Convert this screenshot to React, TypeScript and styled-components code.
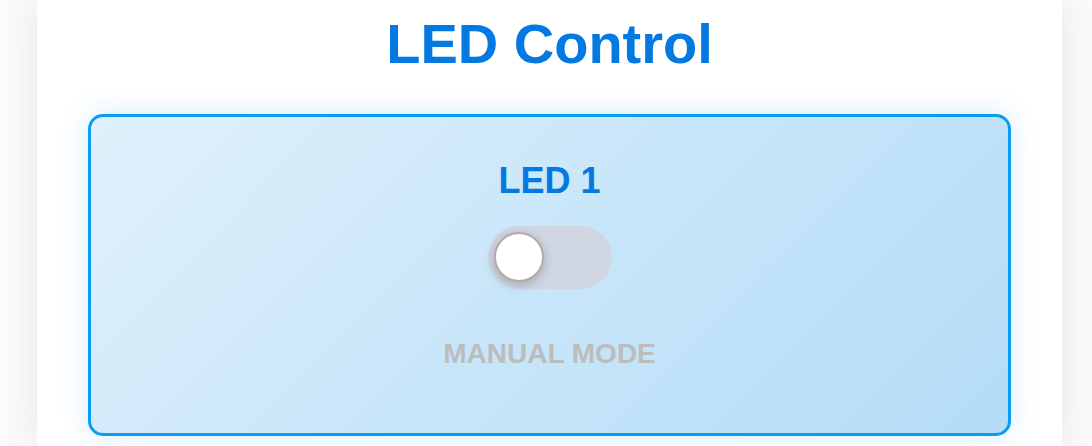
import React, { useState } from "react";
import styled, { createGlobalStyle } from "styled-components";

const Global = createGlobalStyle`
  html, body { margin: 0; padding: 0; }
  body {
    background: #fbfbfb;
    font-family: "Liberation Sans", Arial, sans-serif;
    overflow: hidden;
  }
`;

const Page = styled.div`
  display: flex;
  justify-content: flex-start;
  padding: 0 30px 0 37px;
  height: 446px;
  box-sizing: border-box;
`;

const Container = styled.main`
  flex: 1;
  background: #ffffff;
  box-shadow: 0 0 40px rgba(0, 0, 0, 0.09);
  padding: 11px 51px 40px;
  display: flex;
  flex-direction: column;
  align-items: stretch;
`;

const Title = styled.h1`
  margin: 0 0 38px;
  text-align: center;
  font-size: 56px;
  line-height: normal;
  font-weight: 700;
  color: #0479e2;
`;

const Card = styled.section`
  border: 3px solid #0a9cee;
  border-radius: 15px;
  background: linear-gradient(135deg, #e0f0fb 0%, #c8e6f9 50%, #b4dcf6 100%);
  box-shadow: 0 0 28px rgba(10, 156, 238, 0.18);
  padding: 43px 20px 63px;
  display: flex;
  flex-direction: column;
  align-items: center;
`;

const LedName = styled.h2`
  margin: 0 0 24px;
  font-size: 36px;
  line-height: normal;
  font-weight: 700;
  color: #0479e2;
`;

const Track = styled.button<{ $on: boolean }>`
  position: relative;
  width: 124px;
  height: 63px;
  border: none;
  padding: 0;
  border-radius: 32px;
  background: ${(p) => (p.$on ? "#0a9cee" : "#d0d7e3")};
  cursor: pointer;
  display: flex;
  align-items: center;
`;

const Knob = styled.span<{ $on: boolean }>`
  position: absolute;
  top: 6px;
  left: ${(p) => (p.$on ? "68px" : "6px")};
  width: 50px;
  height: 50px;
  box-sizing: border-box;
  border-radius: 50%;
  background: #ffffff;
  border: 2px solid #b3aca6;
  box-shadow: 0 3px 12px rgba(0, 0, 0, 0.22);
  transition: left 0.2s;
`;

const Mode = styled.div`
  margin-top: 49px;
  font-size: 28px;
  line-height: normal;
  font-weight: 700;
  color: #bcbcbc;
  text-transform: uppercase;
`;

export default function App() {
  const [on, setOn] = useState(false);
  return (
    <>
      <Global />
      <Page>
        <Container>
          <Title>LED Control</Title>
          <Card>
            <LedName>LED 1</LedName>
            <Track $on={on} onClick={() => setOn(!on)} aria-label="Toggle LED 1">
              <Knob $on={on} />
            </Track>
            <Mode>Manual Mode</Mode>
          </Card>
        </Container>
      </Page>
    </>
  );
}
